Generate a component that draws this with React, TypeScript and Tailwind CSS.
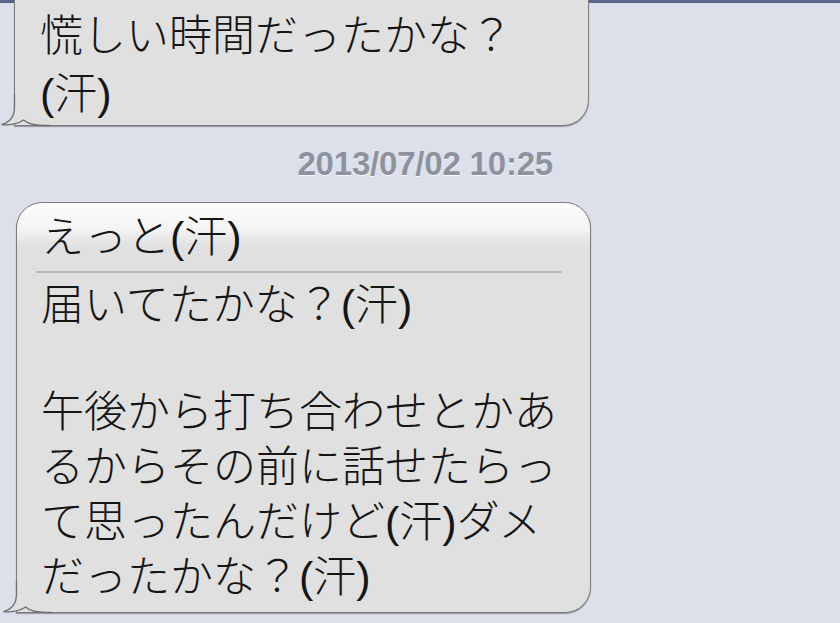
import type { ReactNode } from 'react'

const jp = { fontFamily: '"Liberation Sans", "Noto Sans CJK JP", sans-serif' }

function Tail() {
  return (
    <svg
      className="absolute left-[-15px] bottom-[-3px] w-[50px] h-[34px]"
      viewBox="0 0 50 34"
    >
      <path
        d="M14.5 0 L14.5 13 C14.5 23 9 28.5 1.5 30.5 C9 31.8 18 30 23.5 26 C28 30 34 31.5 50 31.5 L50 0 Z"
        fill="#e0e0e0"
      />
      <path
        d="M14.5 0 L14.5 13 C14.5 23 9 28.5 1.5 30.5 C9 31.8 18 30 23.5 26 C28 30 34 31.5 50 31.5"
        fill="none"
        stroke="#6f6f6f"
        strokeWidth="1.3"
      />
    </svg>
  )
}

function Bubble({ className, children }: { className?: string; children: ReactNode }) {
  return (
    <div
      className={
        'relative ml-[14px] w-[575px] rounded-[26px] rounded-bl-none border border-[#7c7c7c] bg-[#e0e0e0] shadow-[0_1px_1px_rgba(0,0,0,0.35)] text-[43px] font-light text-[#151515] ' +
        (className ?? '')
      }
      style={jp}
    >
      <Tail />
      <div className="relative">{children}</div>
    </div>
  )
}

export default function App() {
  return (
    <div className="relative w-[840px] h-[623px] overflow-hidden bg-[#dbe0eb]">
      <div className="absolute top-0 left-0 right-0 h-[3px] bg-[#56658a]" />
      <div className="flex flex-col">
        <Bubble className="mt-[-40px] pt-[46px] pb-[2px] pl-[25px] leading-[58px]">
          <div>慌しい時間だったかな？</div>
          <div>(汗)</div>
        </Bubble>

        <div className="w-[590px] pr-[37px] pt-[19px] text-right">
          <span
            className="text-[33px] font-bold leading-[38px] tracking-[-0.2px] text-[#8d929e] [text-shadow:0_1px_0_rgba(255,255,255,0.8)]"
            style={{ fontFamily: '"Liberation Sans", Arial, sans-serif' }}
          >
            2013/07/02 10:25
          </span>
        </div>

        <Bubble className="mt-[19px] ml-[16px] pb-[7px] leading-[55px] bg-[linear-gradient(to_bottom,#fdfdfd_0px,#f4f4f4_26px,#e8e8e8_36px,#e0e0e0_44px,#e0e0e0_100%)]">
          <div className="pl-[24px] pt-[7px]">えっと(汗)</div>
          <div className="ml-[19px] mr-[28px] mt-[6px] h-[2px] bg-[#bababa]" />
          <div className="pl-[24px] pt-[5px]">
            <div>届いてたかな？(汗)</div>
            <div className="h-[52px]" />
            <div>午後から打ち合わせとかあ</div>
            <div>るからその前に話せたらっ</div>
            <div>て思ったんだけど(汗)ダメ</div>
            <div>だったかな？(汗)</div>
          </div>
        </Bubble>
      </div>
    </div>
  )
}
